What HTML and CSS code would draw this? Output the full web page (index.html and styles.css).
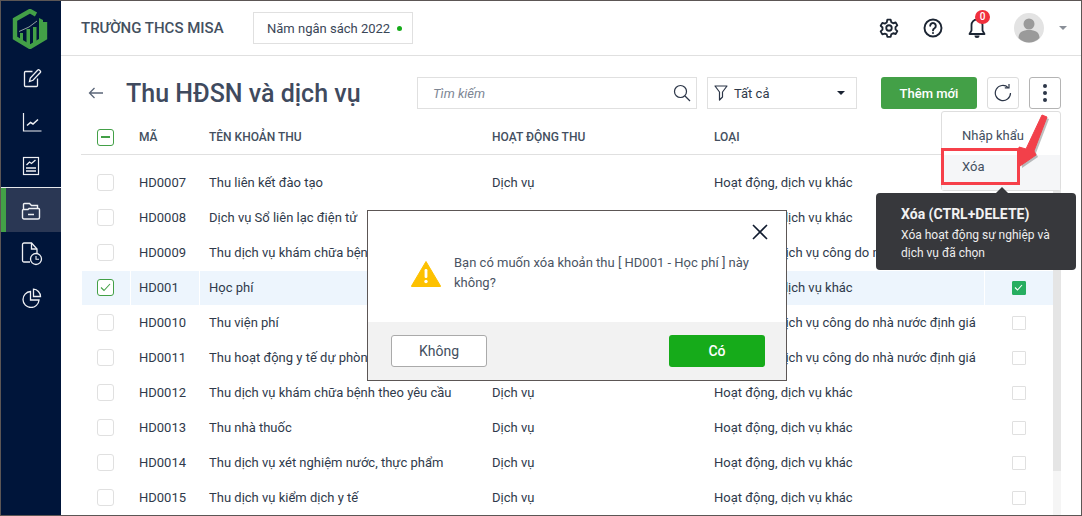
FILE: index.html
```html
<!DOCTYPE html>
<html lang="vi">
<head>
<meta charset="utf-8">
<title>Thu HĐSN và dịch vụ</title>
<link rel="stylesheet" href="styles.css">
</head>
<body>
<div class="app">
  <aside class="sidebar">
    <div class="logo">
      <svg width="36" height="40" viewBox="0 0 36 40"><path d="M24 5.500 18 2 3 10.500V29l15 9 15-9V13" fill="none" stroke="#43a047" stroke-width="4.400"/><path d="M8 30v-6h3v8zM14.500 35V20h3.500v16zM21 35V18h3.500v14z" fill="#43a047"/><path d="M27 33V9l2 1 2 1v19z" fill="#43a047"/><path d="M7 22.500 17 18l8-6" fill="none" stroke="#cfd8cf" stroke-width=".7"/></svg>
    </div>
    <nav class="nav">
      <a class="nav-item"><svg width="20" height="20" viewBox="0 0 20 20" fill="none" stroke="#eef0f4" stroke-width="1.300"><path d="M10.500 3.500H3.500a1 1 0 0 0-1 1v13a1 1 0 0 0 1 1h11a1 1 0 0 0 1-1v-7"/><path d="M7.500 13.500l.8-3.500 7.500-8a1 1 0 0 1 1.500 0l1 1a1 1 0 0 1 0 1.500l-7.300 7.800z"/></svg></a>
      <a class="nav-item"><svg width="20" height="20" viewBox="0 0 20 20" fill="none" stroke="#eef0f4" stroke-width="1.200"><path d="M1.500 1v18h18"/><path d="M5 13.500l3.500-3 2.500 1.500 5-4.500" stroke-width="1.500"/></svg></a>
      <a class="nav-item nav-sep"><svg width="18" height="20" viewBox="0 0 18 20" fill="none" stroke="#eef0f4" stroke-width="1.200"><rect x="1.500" y="1.500" width="15" height="17"/><path d="M4.500 9l3-3 2 1.500L13.500 4" stroke-width="1.300"/><path d="M4 12h10M4 15h10" stroke-width="1.500"/></svg></a>
      <a class="nav-item active"><svg width="20" height="18" viewBox="0 0 20 18" fill="none" stroke="#eef0f4" stroke-width="1.400"><path d="M2.500 7V2.500a1 1 0 0 1 1-1h5l2 2h6v3"/><path d="M1.500 8.500a1 1 0 0 1 1-1H7l1-1h9.500a1 1 0 0 1 1 1v8a1.500 1.500 0 0 1-1.500 1.500H3a1.500 1.500 0 0 1-1.500-1.500z"/><path d="M7 12.500h6" stroke-width="1.500"/></svg></a>
      <a class="nav-item"><svg width="22" height="24" viewBox="0 0 22 24" fill="none" stroke="#eef0f4" stroke-width="1.300"><path d="M9 20H3a1.500 1.500 0 0 1-1.500-1.500v-16A1.500 1.500 0 0 1 3 1h7.500l5.500 6v5"/><path d="M10.500 1v6H16" /><circle cx="15" cy="17" r="5.500"/><path d="M15 14v3.300h3" stroke-width="1.100"/></svg></a>
      <a class="nav-item"><svg width="20" height="20" viewBox="0 0 20 20" fill="none" stroke="#eef0f4" stroke-width="1.300"><path d="M8.500 3.500a8 8 0 1 0 8.500 8.500H8.500z"/><path d="M11.500 1.200a7.500 7.500 0 0 1 7 7.300h-7z"/></svg></a>
    </nav>
  </aside>

  <main class="main">
    <header class="topbar">
      <div class="org">TRƯỜNG THCS MISA</div>
      <div class="year">Năm ngân sách 2022<span class="dot"></span></div>
      <div class="top-icons">
        <svg class="t-icon" width="20" height="20" viewBox="0 0 24 24" fill="none" stroke="#1c2533" stroke-width="2.200"><path d="M10 2h4l.7 3 2.300 1.300 3-.9 2 3.500-2.200 2.100v2.600l2.200 2.100-2 3.500-3-.9-2.300 1.300-.7 3h-4l-.7-3L7 18.700l-3 .9-2-3.500 2.200-2.100v-2.600L2 9.300l2-3.500 3 .9 2.300-1.300z" stroke-linejoin="round"/><circle cx="12" cy="12" r="3.300"/></svg>
        <svg class="t-icon" width="20" height="20" viewBox="0 0 20 20" fill="none" stroke="#1c2533" stroke-width="1.900"><circle cx="10" cy="10" r="8.500"/><path d="M7.200 7.800a2.800 2.800 0 1 1 4.300 2.400c-1 .6-1.500 1-1.500 2.200" stroke-linecap="round"/><circle cx="10" cy="15" r=".6" fill="#1c2533" stroke-width="1"/></svg>
        <div class="bell">
          <svg width="20" height="22" viewBox="0 0 20 22" fill="none" stroke="#1c2533" stroke-width="1.800"><path d="M10 2.500a5.500 5.500 0 0 0-5.500 5.500v5.500L2.500 17h15l-2-3.500V8A5.500 5.500 0 0 0 10 2.500z" stroke-linejoin="round"/><path d="M7.500 18.500a2.500 2.500 0 0 0 5 0z" fill="#1c2533" stroke="none"/></svg>
          <span class="badge">0</span>
        </div>
        <div class="avatar"><svg width="30" height="30" viewBox="0 0 30 30"><circle cx="15" cy="15" r="15" fill="#e3e3e3"/><circle cx="15" cy="11" r="5.500" fill="#9a9a9a"/><path d="M4.500 25c0-6 4.500-8 10.500-8s10.500 2 10.500 8a14.500 14.500 0 0 1-21 0z" fill="#9a9a9a"/></svg></div>
        <span class="caret"></span>
      </div>
    </header>

    <section class="page">
      <div class="toolbar">
        <svg class="back" width="16" height="12" viewBox="0 0 16 12" fill="none" stroke="#5b6678" stroke-width="1.300"><path d="M15 6H1.500M6.500 1 1.500 6l5 5"/></svg>
        <h1 class="title">Thu HĐSN và dịch vụ</h1>
        <div class="search"><span class="ph">Tìm kiếm</span>
          <svg width="18" height="18" viewBox="0 0 18 18" fill="none" stroke="#2c3648" stroke-width="1.200"><circle cx="7.500" cy="7.500" r="6"/><path d="M12 12l5 5"/></svg>
        </div>
        <div class="filter">
          <svg width="14" height="16" viewBox="0 0 14 16" fill="none" stroke="#2c3648" stroke-width="1.200"><path d="M1 1h12L8.500 7v5L5.500 15V7z" stroke-linejoin="round"/></svg>
          <span class="filter-text">Tất cả</span><span class="caret dark"></span>
        </div>
        <button class="btn-add">Thêm mới</button>
        <button class="btn-icon"><svg width="18" height="18" viewBox="0 0 18 18" fill="none" stroke="#2c3648" stroke-width="1.200"><path d="M14.200 3.600A7.600 7.600 0 1 0 16.500 9"/><path d="M10.800 3.800h4.200V0" /></svg></button>
        <button class="btn-icon more"><span></span><span></span><span></span></button>
      </div>

      <div class="thead grid">
        <div><span class="cb head-cb"><i></i></span></div>
        <div>MÃ</div><div>TÊN KHOẢN THU</div><div>HOẠT ĐỘNG THU</div><div>LOẠI</div><div></div>
      </div>

      <div class="tbody">
        <div class="rows">
          <div class="row grid"><div><span class="cb"></span></div><div>HD0007</div><div>Thu liên kết đào tạo</div><div>Dịch vụ</div><div>Hoạt động, dịch vụ khác</div><div><span class="cb small"></span></div></div>
          <div class="row grid"><div><span class="cb"></span></div><div>HD0008</div><div>Dịch vụ Sổ liên lạc điện tử</div><div>Dịch vụ</div><div>Hoạt động, dịch vụ khác</div><div><span class="cb small"></span></div></div>
          <div class="row grid"><div><span class="cb"></span></div><div>HD0009</div><div>Thu dịch vụ khám chữa bệnh</div><div>Dịch vụ</div><div>Hoạt động dịch vụ công do nhà nước định giá</div><div><span class="cb small"></span></div></div>
          <div class="row grid selected"><div><span class="cb checked"><svg width="11" height="9" viewBox="0 0 11 9" fill="none" stroke="#43a047" stroke-width="1.100"><path d="M1 4.500 4 7.500 10 1"/></svg></span></div><div>HD001</div><div>Học phí</div><div>Dịch vụ</div><div>Hoạt động, dịch vụ khác</div><div><span class="cb small on"><svg width="9" height="7" viewBox="0 0 9 7" fill="none" stroke="#fff" stroke-width="1.100"><path d="M1 3.500 3.500 6 8 1"/></svg></span></div></div>
          <div class="row grid"><div><span class="cb"></span></div><div>HD0010</div><div>Thu viện phí</div><div>Dịch vụ</div><div>Hoạt động dịch vụ công do nhà nước định giá</div><div><span class="cb small"></span></div></div>
          <div class="row grid"><div><span class="cb"></span></div><div>HD0011</div><div>Thu hoạt động y tế dự phòng</div><div>Dịch vụ</div><div>Hoạt động dịch vụ công do nhà nước định giá</div><div><span class="cb small"></span></div></div>
          <div class="row grid"><div><span class="cb"></span></div><div>HD0012</div><div>Thu dịch vụ khám chữa bệnh theo yêu cầu</div><div>Dịch vụ</div><div>Hoạt động, dịch vụ khác</div><div><span class="cb small"></span></div></div>
          <div class="row grid"><div><span class="cb"></span></div><div>HD0013</div><div>Thu nhà thuốc</div><div>Dịch vụ</div><div>Hoạt động, dịch vụ khác</div><div><span class="cb small"></span></div></div>
          <div class="row grid"><div><span class="cb"></span></div><div>HD0014</div><div>Thu dịch vụ xét nghiệm nước, thực phẩm</div><div>Dịch vụ</div><div>Hoạt động, dịch vụ khác</div><div><span class="cb small"></span></div></div>
          <div class="row grid"><div><span class="cb"></span></div><div>HD0015</div><div>Thu dịch vụ kiểm dịch y tế</div><div>Dịch vụ</div><div>Hoạt động, dịch vụ khác</div><div><span class="cb small"></span></div></div>
        </div>
        <div class="scrollbar"><div class="thumb"></div></div>
      </div>
    </section>
  </main>

  <div class="menu">
    <div class="menu-item">Nhập khẩu</div>
    <div class="menu-item hover">Xóa</div>
  </div>
  <div class="redbox"></div>
  <svg class="red-arrow" width="40" height="60" viewBox="0 0 40 60"><path d="M24 2 29 4 16 38 18 42 2 53 1 34 8 36Z" fill="#000" opacity=".25" transform="translate(2 2)"/><path d="M24 2 29 4 16 38 18 42 2 53 1 34 8 36Z" fill="#f2404a" stroke="#f2404a" stroke-linejoin="round"/></svg>
  <div class="tooltip">
    <div class="tip-title">Xóa (CTRL+DELETE)</div>
    <div class="tip-text">Xóa hoạt động sự nghiệp và dịch vụ đã chọn</div>
  </div>

  <div class="dialog">
    <div class="dialog-body">
      <svg class="close" width="16" height="16" viewBox="0 0 16 16" fill="none" stroke="#0f1a2e" stroke-width="1.600"><path d="M1 1l14 14M15 1 1 15"/></svg>
      <svg class="warn" width="30" height="27" viewBox="0 0 30 27"><path d="M15 1.500 29.500 26a.5.5 0 0 1 0 .5H.5a.5.5 0 0 1 0-.5z" fill="#fdc100" stroke="#fdc100" stroke-linejoin="round"/><rect x="13.600" y="9" width="2.800" height="9" rx="1.200" fill="#fff"/><circle cx="15" cy="21.500" r="1.700" fill="#fff"/></svg>
      <p class="msg">Bạn có muốn xóa khoản thu [ HD001 - Học phí ] này không?</p>
    </div>
    <div class="dialog-foot">
      <button class="btn-no">Không</button>
      <button class="btn-yes">Có</button>
    </div>
  </div>
</div>
</body>
</html>
```
FILE: styles.css
```css
* { box-sizing: border-box; }
html, body { margin: 0; padding: 0; }
body { font-family: Roboto, "Liberation Sans", sans-serif; color: #2f3a4b; font-size: 13px; }

.app {
  position: relative;
  width: 1082px;
  height: 516px;
  border: 1px solid #5c5655;
  display: flex;
  overflow: hidden;
  background: #fff;
}

.sidebar { width: 60px; flex: none; background: #00153a; display: flex; flex-direction: column; }
.logo { height: 55px; padding: 8px 0 0 11px; }
.nav { display: flex; flex-direction: column; }
.nav-item { height: 44px; padding-left: 2px; display: flex; align-items: center; justify-content: center; }
.nav-sep { border-bottom: 1px solid #e6e8ec; height: 44px; padding-left: 0; }
.active { background: #2a3754; border-left: 5px solid #43a047; padding: 2px 5px 0 0; }

.main { flex: 1; min-width: 0; display: flex; flex-direction: column; }

.topbar { height: 55px; flex: none; border-bottom: 1px solid #e0e0e0; display: flex; align-items: center; padding-left: 20px; }
.org { font-size: 15px; font-weight: 500; color: #44505f; width: 172px; white-space: nowrap; }
.year { width: 160px; height: 32px; border: 1px solid #e0e0e0; display: flex; align-items: center; padding-left: 13px; font-size: 13px; color: #3a4657; }
.dot { width: 5px; height: 5px; border-radius: 50%; background: #16ab1a; margin-left: 7px; }
.top-icons { margin-left: auto; display: flex; align-items: center; padding-right: 14px; }
.t-icon { margin-right: 24px; }
.bell { position: relative; width: 20px; height: 22px; margin-right: 27px; }
.badge { position: absolute; left: 8px; top: -7px; width: 15px; height: 14px; border-radius: 50%; background: #f0303d; color: #fff; font-size: 10px; font-weight: 500; line-height: 14px; text-align: center; }
.avatar { width: 30px; height: 30px; margin-right: 15px; }
.caret { width: 0; height: 0; border-left: 4px solid transparent; border-right: 4px solid transparent; border-top: 4px solid #8a8f98; }
.caret.dark { border-top-color: #1a2333; border-left-width: 4.500px; border-right-width: 4.500px; margin-left: auto; }

.page { flex: 1; min-height: 0; padding: 21px 20px 0; display: flex; flex-direction: column; }

.toolbar { height: 32px; flex: none; display: flex; align-items: center; }
.back { margin-left: 7px; flex: none; }
.title { margin: 0 0 0 22px; width: 291px; font-size: 25px; font-weight: 500; color: #3f4a5e; white-space: nowrap; }
.search { width: 280px; height: 32px; border: 1px solid #e0e0e0; display: flex; align-items: center; justify-content: space-between; padding: 0 5px 0 15px; }
.ph { font-style: italic; color: #7d8694; font-size: 13px; }
.filter { width: 150px; height: 32px; margin-left: 10px; border: 1px solid #e0e0e0; display: flex; align-items: center; padding: 0 11px 0 6px; }
.filter-text { margin-left: 6px; color: #2f3a4b; }
.btn-add { width: 96px; height: 32px; margin-left: 24px; border: 0; border-radius: 3px; background: #43a047; color: #fff; font: 500 13px Roboto, sans-serif; }
.btn-icon { width: 32px; height: 32px; margin-left: 10px; padding: 0; border: 1px solid #dcdcdc; border-radius: 3px; background: #fff; display: flex; align-items: center; justify-content: center; }
.more { flex-direction: column; gap: 3px; border-color: #b4b4b4; }
.more span { width: 4px; height: 4px; border-radius: 50%; background: #2c3648; }

.grid { display: grid; grid-template-columns: 49px 69px 283px 222px 280px 69px; align-items: center; }
.thead { width: 972px; height: 35px; margin-top: 11px; flex: none; border-bottom: 1px solid #e0e0e0; font-size: 12px; font-weight: 500; color: #434f60; }
.thead > div { padding-left: 10px; }
.thead > div:first-child { padding-left: 16px; }
.thead > div:nth-child(2) { padding-left: 9px; }

.tbody { flex: 1; min-height: 0; display: flex; }
.rows { width: 972px; padding-top: 10px; }
.row { height: 35px; }
.row > div { height: 34px; display: flex; align-items: center; padding-left: 9px; border-left: 1px solid #fff; white-space: nowrap; }
.row > div:first-child { padding-left: 15px; border-left: 0; margin-left: 1px; }
.row > div:nth-child(2) { padding-left: 8px; }
.row > div:last-child { justify-content: center; padding-left: 0; padding-right: 1px; }
.selected > div { background: #edf5fd; }

.cb { width: 17px; height: 17px; display: flex; align-items: center; justify-content: center; border: 1px solid #e0e0e0; border-radius: 3px; background: #fff; }
.cb.small { width: 14px; height: 14px; border-radius: 1px; }
.cb.on { background: #27ae60; border-color: #27ae60; }
.cb.checked, .head-cb { border-color: #43a047; }
.head-cb i { width: 9px; height: 2px; background: #43a047; }

.scrollbar { width: 8px; background: #f5f5f5; }
.thumb { height: 316px; background: #e5e5e5; }

.menu { position: absolute; left: 940px; top: 110px; width: 120px; height: 80px; background: #fff; border: 1px solid #dedede; border-radius: 3px; padding-top: 4px; }
.menu-item { height: 39px; padding: 0 20px; display: flex; align-items: center; font-size: 13px; color: #434f60; }
.menu-item.hover { background: #f5f6f8; height: 35px; padding-bottom: 12px; }
.redbox { position: absolute; left: 940px; top: 147px; width: 79px; height: 37px; border: 3px solid #f6404a; }
.red-arrow { position: absolute; left: 1017px; top: 112px; }

.tooltip { position: absolute; left: 875px; top: 192px; width: 200px; height: 77px; padding: 13px 20px 0 25px; background: #37383c; border-radius: 4px; color: #eee; font-size: 12px; line-height: 18px; }
.tooltip::before { content: ""; position: absolute; left: 120px; top: -6px; border-left: 6px solid transparent; border-right: 6px solid transparent; border-bottom: 6px solid #37383c; }
.tip-title { font-size: 14px; font-weight: 700; color: #f2f2f2; line-height: 17px; margin-bottom: 3px; }

.dialog { position: absolute; left: 366px; top: 209px; width: 420px; height: 171px; border: 1px solid #5c5655; background: #fff; display: flex; flex-direction: column; }
.dialog-body { position: relative; flex: 1; padding: 42px 30px 0 86px; }
.close { position: absolute; left: 384px; top: 13px; }
.warn { position: absolute; left: 43px; top: 49px; }
.msg { margin: 0; font-size: 13px; line-height: 20px; color: #4a5463; }
.dialog-foot { height: 58px; flex: none; background: #f2f2f2; display: flex; justify-content: space-between; align-items: center; padding: 0 21px 0 23px; }
.btn-no, .btn-yes { width: 96px; height: 32px; border-radius: 3px; font: 500 13px Roboto, sans-serif; }
.btn-no { background: #fff; border: 1px solid #aaa; color: #434f60; font-weight: 400; font-size: 14px; }
.btn-yes { background: #16ab1a; border: 0; color: #fff; font-size: 14px; }
```
